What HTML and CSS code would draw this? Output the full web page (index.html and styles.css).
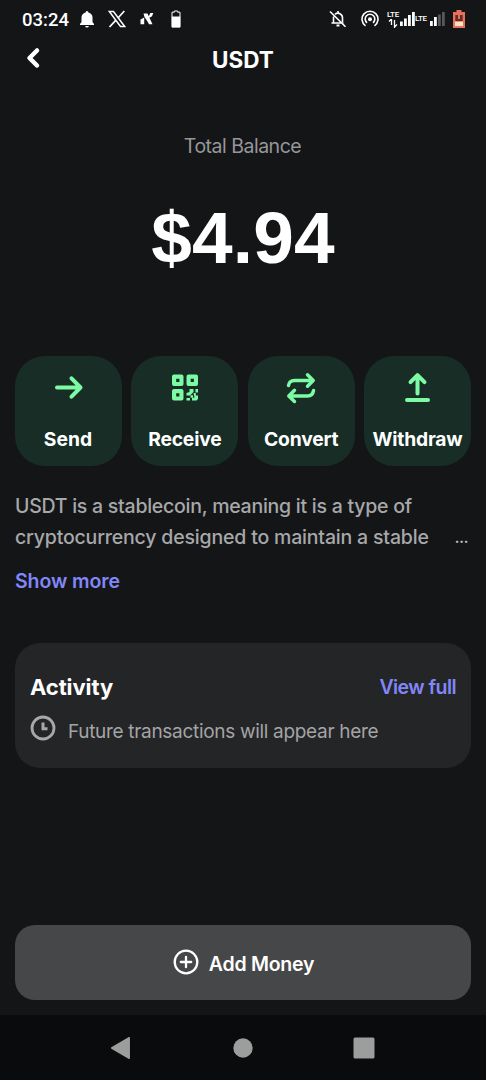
FILE: index.html
```html
<!DOCTYPE html>
<html lang="en">
<head>
<meta charset="utf-8">
<title>USDT</title>
<link rel="stylesheet" href="styles.css">
</head>
<body>
<div class="screen">
  <div class="status">
    <div class="status-left">
      <span class="clock">03:24</span>
      <svg class="ic-bell" width="16" height="18" viewBox="0 0 16 18" fill="#fff"><path d="M8 1a1.4 1.4 0 0 1 1.4 1.5C12.200 3.200 13.500 5.200 13.500 7.500v4.500l1.500 2v1H1v-1l1.500-2V7.500c0-2.300 1.300-4.300 4.100-5A1.400 1.400 0 0 1 8 1zM6.200 16h3.600a1.800 1.500 0 0 1-3.600 0z"/></svg>
      <svg class="ic-x" width="18" height="18" viewBox="0 0 18 18" fill="none" stroke="#fff"><path d="M1.300 1.500h4.200l11.200 15h-4.200z" stroke-width="1.500"/><path d="M16.300 1l-6.500 7.200M7.700 10.300l-6.200 6.700" stroke-width="1.700"/></svg>
      <svg class="ic-n" width="14" height="14" viewBox="0 0 14 14" fill="#fff"><path d="M.5 7.500l3.700-2v6.800H.5zM3.500 1.500h4l5 10.800H9L7.500 9.500 4.500 5zM8.500 5l1.800-4h3L12 4.200 10 5.500z"/></svg>
      <svg class="ic-batt" width="10" height="18" viewBox="0 0 10 18"><path d="M3.300 2.200V1h3.400v1.200H9V17H1V2.200z" fill="none" stroke="#fff"/><path d="M.8 6.500h8.400v10.800H.8z" fill="#fff"/></svg>
    </div>
    <div class="status-right">
      <svg class="ic-mute" width="18" height="18" viewBox="0 0 18 18" fill="none" stroke="#fff" stroke-width="1.600"><path d="M6 4.400A4.500 4.500 0 0 1 13.500 8v4M4.500 6.500V13H2.500h12M9 1v2M1 1.500l15.500 15.300"/><path d="M7.500 15.500h3" stroke-width="2"/></svg>
      <svg class="ic-cast" width="18" height="18" viewBox="0 0 18 18" fill="none" stroke="#fff" stroke-width="1.600"><path d="M4.500 15.800a8 8 0 1 1 9 0M6 12.800a4.800 4.800 0 1 1 6 0"/><circle cx="9" cy="9.200" r="2" fill="#fff" stroke="none"/></svg>
      <div class="net">
        <span class="lte">LTE</span>
        <svg class="updown" width="10" height="9" viewBox="0 0 10 9" fill="none" stroke="#fff" stroke-width="1.300"><path d="M3.500 0v6M1 2.500L3.500 0M6.500 1v8M6.500 8L9 5.500"/></svg>
      </div>
      <svg class="bars" width="15" height="14" viewBox="0 0 15 14" fill="#fff"><path d="M0 9.500h2.800V14H0zM4 6.500h2.800V14H4zM8 3h2.800v11H8zM12 0h2.800v14H12z"/></svg>
      <span class="lte lte2">LTE</span>
      <svg class="bars2" width="15" height="14" viewBox="0 0 15 14" fill="#fff"><path d="M0 9h2.800v5H0zM4 5h2.800v9H4z"/><path d="M8 2.500h2.800V14H8zM12 0h2.800v14H12z" fill="#55575a"/></svg>
      <svg class="low" width="12" height="18" viewBox="0 0 12 18"><path d="M3.500 0h5v2H12v16H0V2h3.500z" fill="#e8705d"/><path d="M2.300 5h7.400v6.500H2.300z" fill="#6b2a24"/><path d="M5.300 5h1.400v4H5.300z" fill="#e8a08f"/><path d="M2 11.500h8v4.500H2z" fill="#ffe3c4"/></svg>
    </div>
  </div>

  <header class="header">
    <svg class="back" width="16" height="22" viewBox="0 0 16 22" fill="none" stroke="#fff" stroke-width="4.500" stroke-linecap="round" stroke-linejoin="round"><path d="M12 3.500L4.500 11l7.500 7.500"/></svg>
    <h1 class="title">USDT</h1>
  </header>

  <section class="balance">
    <div class="balance-label">Total Balance</div>
    <div class="amount">$4.94</div>
  </section>

  <nav class="actions">
    <div class="action">
      <svg width="32" height="32" viewBox="0 0 32 32" class="glyph"><path d="M4 15.500h23.500M18.500 6.300l9 9.200-9 9.200"/></svg>
      <span class="send">Send</span>
    </div>
    <div class="action">
      <svg width="32" height="32" viewBox="0 0 32 32" fill="#7dfba4"><path fill-rule="evenodd" d="M5 2.500h7.500A2 2 0 0 1 14.500 4.500V12a2 2 0 0 1-2 2H5a2 2 0 0 1-2-2V4.500a2 2 0 0 1 2-2zm2.200 4.200v3.200h3.200V6.700zM19.500 2.500H27a2 2 0 0 1 2 2V12a2 2 0 0 1-2 2h-7.500a2 2 0 0 1-2-2V4.500a2 2 0 0 1 2-2zm2.200 4.200v3.200h3.200V6.700zM5 17h7.500a2 2 0 0 1 2 2v7.500a2 2 0 0 1-2 2H5a2 2 0 0 1-2-2V19a2 2 0 0 1 2-2zm2.200 4.200v3.200h3.200v-3.200z"/><path d="M20.500 17h4v3l-3.500 3.500h-3.500V21l3-1zM26.500 17H29v3.500h-2.500zM24.500 21h2.300v2.500H29v3.500l-1.500 1.500H23V26l2.500-.5zM17.500 26H21v2.500h-3.500zM21.500 23.300H24v2.400h-2.500z"/></svg>
      <span>Receive</span>
    </div>
    <div class="action">
      <svg width="32" height="32" viewBox="0 0 32 32" class="glyph thin"><path d="M3.500 13.500C4 10 6 8.500 9.500 8.500H28M22.500 2.800l5.700 5.700-5.700 5.700M28.500 18.500c-.5 3.500-2.500 5.500-6 5.500H4M9.500 18.300L3.800 24l5.700 5.500"/></svg>
      <span>Convert</span>
    </div>
    <div class="action">
      <svg class="glyph" width="32" height="32" viewBox="0 0 32 32"><path d="M16.500 21.500V4M9.500 10.200l7-7 7 7M6 28h21"/></svg>
      <span>Withdraw</span>
    </div>
  </nav>

  <section class="about">
    <p class="line l1">USDT is a stablecoin, meaning it is a type of</p>
    <div class="row"><p class="line l2">cryptocurrency designed to maintain a stable</p><span class="dots">...</span></div>
    <a class="link more">Show more</a>
  </section>

  <section class="card">
    <div class="row"><h2 class="card-title">Activity</h2><a class="link full">View full</a></div>
    <div class="empty">
      <svg width="26" height="26" viewBox="0 0 26 26" fill="none" stroke="#a7a8a9"><circle cx="13" cy="13" r="11" stroke-width="2.800"/><path d="M13 7.500v6.200h4.500" stroke-width="3"/></svg>
      <span>Future transactions will appear here</span>
    </div>
  </section>

  <button class="add">
    <svg width="26" height="26" viewBox="0 0 26 26" fill="none" stroke="#fff" stroke-width="2.300" stroke-linecap="round"><circle cx="13" cy="13" r="11.300"/><path d="M13 7.800v10.400M7.800 13h10.400"/></svg>
    <span>Add Money</span>
  </button>

  <footer class="navbar">
    <svg width="22" height="24" viewBox="0 0 22 24" fill="#9c9e9d" stroke="#9c9e9d" stroke-width="1.500" stroke-linejoin="round"><path d="M19.200 1.700v20.600L1.700 12z"/></svg>
    <svg width="20" height="20" viewBox="0 0 20 20" fill="#9c9e9d"><circle cx="10" cy="10" r="9.700"/></svg>
    <svg width="22" height="22" viewBox="0 0 22 22" fill="#9c9e9d"><rect x=".5" y=".5" width="21" height="21" rx="1.500"/></svg>
  </footer>
</div>
</body>
</html>
```
FILE: styles.css
```css
* { box-sizing: border-box; }
body { margin: 0; background: #141517; color: #fff; font-family: Inter, "Liberation Sans", sans-serif; }
h1, h2, p { margin: 0; }
svg { display: block; flex: none; }
span, a, p, h1, h2 { white-space: nowrap; }
.screen { width: 486px; height: 1080px; display: flex; flex-direction: column; overflow: hidden; }

.status { height: 38px; flex: none; display: flex; justify-content: space-between; align-items: center; padding: 0 20px 0 22px; }
.status-left, .status-right { display: flex; align-items: center; }
.clock { width: 57px; font: 500 18.500px/38px Roboto, sans-serif; letter-spacing: 0; padding-top: 1px; }
.ic-x { margin-left: 13px; }
.ic-n { margin-left: 14px; }
.ic-batt { margin-left: 17px; }
.ic-cast { margin-left: 14px; }
.net { width: 14px; height: 17px; margin-left: 7px; display: flex; flex-direction: column; align-items: center; }
.lte { font: 500 8px/8px Roboto, sans-serif; letter-spacing: -0.3px; }
.bars { margin-left: 0; }
.lte2 { width: 14px; }
.bars2 { margin-left: 1px; }
.low { margin-left: 8px; margin-right: 1px; }

.header { height: 42px; flex: none; display: grid; grid-template-columns: 60px 1fr 60px; align-items: center; }
.back { margin-left: 25px; margin-top: -3px; }
.title { text-align: center; font-size: 22.500px; font-weight: 700; line-height: 42px; padding-top: 1px; }

.balance { height: 276px; flex: none; padding-top: 52px; text-align: center; }
.balance-label { font-size: 19.500px; line-height: 28px; color: #96979a; letter-spacing: -0.500px; padding-right: 1px; }
.amount { margin-top: 35px; font: 700 73px/86px "Liberation Sans", Arial, sans-serif; letter-spacing: 0.200px; }

.actions { flex: none; display: grid; grid-template-columns: repeat(4, 107px); justify-content: space-between; padding: 0 15px; }
.action { height: 110px; border-radius: 30px; background: #172d25; display: flex; flex-direction: column; align-items: center; padding-top: 16px; gap: 21px; }
.action span { font-size: 19.300px; font-weight: 650; line-height: 28px; letter-spacing: -0.200px; }
.action .send { padding-right: 1px; letter-spacing: 0; }
.glyph { fill: none; stroke: #7dfba4; stroke-width: 4; stroke-linecap: round; stroke-linejoin: round; }
.thin { stroke-width: 3.500; }

.about { flex: none; padding: 25px 15px 0; height: 177px; }
.line { font-size: 19.500px; line-height: 30px; color: #a7a8aa; font-weight: 450; }
.l1 { letter-spacing: -0.250px; }
.l2 { letter-spacing: -0.180px; }
.row { display: flex; justify-content: space-between; align-items: center; }
.dots { font-size: 18px; line-height: 31px; color: #c4c4c6; padding-right: 3px; letter-spacing: -0.700px; }
.link { display: block; color: #8187f8; font-size: 19.500px; font-weight: 600; letter-spacing: -0.100px; }
.more { margin-top: 15px; line-height: 28px; }

.card { flex: none; margin: 0 15px; height: 125px; border-radius: 25px; background: #242527; padding: 28px 15px 0; }
.card-title { font-size: 22px; font-weight: 650; line-height: 32px; letter-spacing: -0.100px; }
.full { line-height: 30px; letter-spacing: -0.550px; }
.empty { display: flex; align-items: flex-start; gap: 12px; margin-top: 12px; color: #a3a4a6; }
.empty span { font-size: 19px; line-height: 34px; letter-spacing: -0.310px; }

.add { appearance: none; border: 0; flex: none; margin: 157px 15px 15px; height: 75px; border-radius: 20px; background: #464749; color: #fff; font: 600 19.500px/28px Inter, sans-serif; display: flex; align-items: center; justify-content: center; gap: 10px; padding: 2px 0 0 1px; letter-spacing: -0.250px; }
.add svg { margin-top: -3px; }
.navbar { flex: 1; background: #0a0b0d; display: flex; align-items: center; justify-content: space-between; padding: 0 111px 0 110px; }
```
